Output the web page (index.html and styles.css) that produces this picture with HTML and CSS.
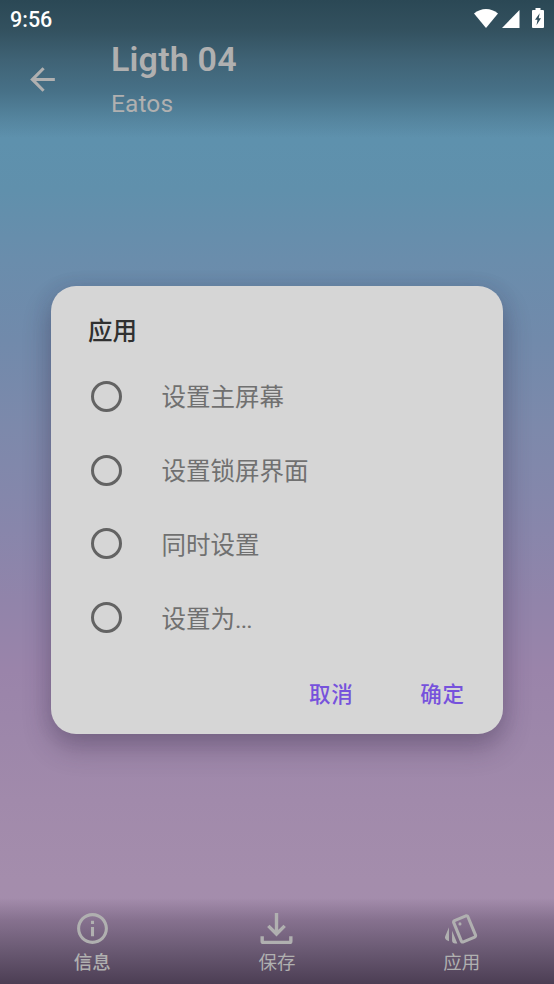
FILE: index.html
```html
<!DOCTYPE html>
<html lang="zh-CN">
<head>
<meta charset="utf-8">
<title>Ligth 04</title>
<link rel="stylesheet" href="styles.css">
</head>
<body>
<div class="screen">
  <div class="top">
    <div class="status">
      <span class="clock">9:56</span>
      <svg class="wifi" viewBox="0 0 24 19"><path d="M0 4.500C7-1.500 17-1.500 24 4.500L12 19Z"/></svg>
      <svg class="signal" viewBox="0 0 18 18"><path d="M17.500 0V18H0Z"/></svg>
      <svg class="battery" viewBox="0 0 12 20"><path fill-rule="evenodd" d="M3.500 0h5v2H11q1 0 1 1v16q0 1-1 1H1q-1 0-1-1V3q0-1 1-1h2.500ZM7.700 5.200 3 11.800h2.500L4.500 17.300 9 10.300H6.700Z"/></svg>
    </div>
    <header class="header">
      <svg class="icon back" viewBox="0 0 24 24"><path d="M20 11H7.830l5.590-5.590L12 4l-8 8 8 8 1.410-1.410L7.830 13H20v-2z"/></svg>
      <div class="heading">
        <h1 class="name">Ligth 04</h1>
        <div class="author">Eatos</div>
      </div>
    </header>
  </div>
  <main class="stage">
    <section class="dialog">
      <h2 class="dialog-title">应用</h2>
      <ul class="options">
        <li class="option"><span class="radio"></span><span class="label">设置主屏幕</span></li>
        <li class="option"><span class="radio"></span><span class="label">设置锁屏界面</span></li>
        <li class="option"><span class="radio"></span><span class="label">同时设置</span></li>
        <li class="option"><span class="radio"></span><span class="label">设置为<span class="dots">...</span></span></li>
      </ul>
      <div class="actions"><button class="action">取消</button><button class="action">确定</button></div>
    </section>
  </main>
  <nav class="nav">
    <div class="tab active">
      <svg class="icon" viewBox="0 0 24 24"><path d="M11 7h2v2h-2zm0 4h2v6h-2zm1-9C6.480 2 2 6.480 2 12s4.480 10 10 10 10-4.480 10-10S17.520 2 12 2zm0 18c-4.410 0-8-3.590-8-8s3.590-8 8-8 8 3.590 8 8-3.590 8-8 8z"/></svg>
      <span>信息</span>
    </div>
    <div class="tab">
      <svg class="icon" viewBox="0 0 24 24"><path class="line" d="M12 2V15M6.700 10.300 12 15.600 17.300 10.300M2.700 17V20.200Q2.700 21 3.500 21H20.500Q21.300 21 21.300 20.200V17"/></svg>
      <span>保存</span>
    </div>
    <div class="tab">
      <svg class="icon" viewBox="0 0 24 24"><path d="M2.530 19.650l1.340.560v-9.030l-2.430 5.860c-.410 1.020.080 2.190 1.090 2.610zm19.500-3.700L17.070 3.980c-.310-.750-1.040-1.210-1.810-1.230-.260 0-.530.040-.790.150L7.100 5.950c-.750.310-1.210 1.030-1.230 1.800-.010.270.040.540.150.800l4.960 11.970c.310.760 1.050 1.220 1.830 1.230.260 0 .520-.050.770-.150l7.360-3.050c1.020-.420 1.510-1.590 1.090-2.600zm-9.200 3.800L7.870 7.790l7.350-3.040h.010l4.950 11.950-7.350 3.050zM5.880 19.750c0 1.100.900 2 2 2h1.450l-3.450-8.340v6.340z"/><circle cx="11" cy="9" r="1"/></svg>
      <span>应用</span>
    </div>
  </nav>
</div>
</body>
</html>
```
FILE: styles.css
```css
* { box-sizing: border-box; }
body {
  margin: 0;
  font-family: Roboto, "Noto Sans CJK SC", sans-serif;
  color: #b0b0b0;
}
.screen {
  width: 554px;
  height: 984px;
  display: flex;
  flex-direction: column;
  overflow: hidden;
  background: linear-gradient(#5a8aa8 0, #5e91ad 140px, #6090ac 190px, #6a8dac 260px, #718aab 340px, #7d89ab 430px, #8886ab 530px, #9184aa 600px, #9a84aa 670px, #9d87aa 740px, #a18aab 800px, #a48dac 880px, #a48cad 984px);
}
.top {
  height: 138px;
  background: linear-gradient(#2b4855 0, #33515f 30px, rgba(62, 97, 115, .96) 60px, rgba(69, 110, 132, .9) 92px, rgba(80, 126, 150, .65) 118px, rgba(94, 145, 173, 0) 138px);
}
.status {
  height: 38px;
  padding: 0 10px;
  display: flex;
  align-items: center;
  color: #fff;
}
.status svg { fill: #fff; }
.clock { flex: 1; font-size: 21.500px; font-weight: 500; line-height: 36px; padding-top: 2px; }
.wifi { width: 24px; height: 19px; margin-bottom: 2px; }
.signal { width: 18px; height: 18px; margin-left: 4px; margin-bottom: 1px; }
.battery { width: 12px; height: 20px; margin: 0 0 2px 12px; }
.header { display: flex; height: 84px; padding-left: 24px; align-items: center; }
.icon { width: 37px; height: 37px; fill: #b0b0b0; display: block; }
.icon .line { fill: none; stroke: #b0b0b0; stroke-width: 2.200; }
.back { margin-bottom: 1px; }
.heading { margin: 4px 0 0 50px; }
.name { margin: 0; font-size: 34px; line-height: 43px; font-weight: 600; letter-spacing: .2px; }
.author { font-size: 24.500px; line-height: 46px; letter-spacing: .1px; }
.stage { flex: 1; padding: 148px 51px 0; }
.dialog {
  height: 448px;
  border-radius: 25px;
  background: #d6d6d6;
  padding: 27px 37px 0;
  box-shadow: 0 14px 28px rgba(45, 30, 60, .3), 0 2px 20px rgba(45, 40, 70, .12);
}
.dialog-title { margin: 0 0 8.500px; color: #303030; font-size: 24.500px; line-height: 38px; font-weight: 500; }
.options { list-style: none; margin: 0; padding: 0; }
.option { height: 73.800px; display: flex; align-items: center; color: #707070; font-size: 24.500px; }
.label { padding-bottom: 1px; }
.radio { width: 31px; height: 31px; margin: 0 40px 0 2.600px; border: 3px solid #636363; border-radius: 50%; }
.dots { letter-spacing: -.9px; }
.actions { display: flex; justify-content: flex-end; gap: 67px; padding-top: 24.400px; padding-right: 1.500px; }
.action { border: 0; padding: 0; background: none; color: #7652dc; font: 500 21.500px/32px Roboto, "Noto Sans CJK SC", sans-serif; letter-spacing: .6px; }
.nav {
  height: 86px;
  display: grid;
  grid-template-columns: repeat(3, 1fr);
  background: linear-gradient(rgba(76, 62, 83, 0), rgba(98, 80, 107, .45) 22px, rgba(96, 81, 105, .85) 52px, #4c3e54);
}
.tab { display: flex; flex-direction: column; align-items: center; gap: 2px; padding-top: 12px; font-size: 18.500px; line-height: 28px; }
.active { font-weight: 500; }
```
